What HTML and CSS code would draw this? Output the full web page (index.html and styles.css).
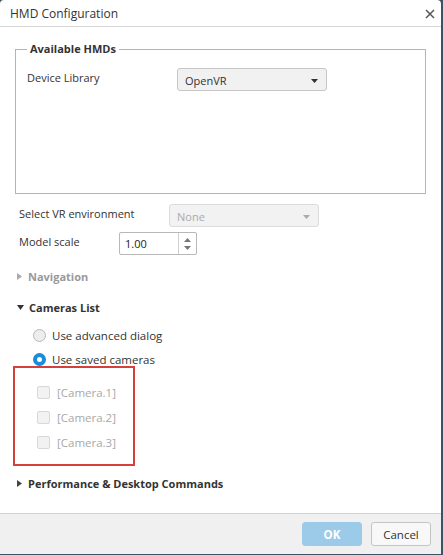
FILE: index.html
```html
<!DOCTYPE html>
<html>
<head>
<meta charset="utf-8">
<link rel="stylesheet" href="styles.css">
</head>
<body>
<div class="window">
  <div class="titlebar">
    <span class="title">HMD Configuration</span>
    <svg class="close" width="10" height="10" viewBox="0 0 10 10"><path d="M1 1L9 9M9 1L1 9" stroke="#555" stroke-width="1.5" fill="none"/></svg>
  </div>
  <div class="content">
    <fieldset class="group">
      <legend class="legend">Available HMDs</legend>
      <div class="row device-row">
        <span class="label device-label">Device Library</span>
        <div class="select">
          <span>OpenVR</span>
          <svg width="7" height="4" viewBox="0 0 7 4"><path d="M0 0H7L3.5 4Z" fill="#333"/></svg>
        </div>
      </div>
    </fieldset>
    <div class="row env-row">
      <span class="label env-label">Select VR environment</span>
      <div class="select disabled">
        <span>None</span>
        <svg width="7" height="4" viewBox="0 0 7 4"><path d="M0 0H7L3.5 4Z" fill="#aaa"/></svg>
      </div>
    </div>
    <div class="row scale-row">
      <span class="label scale-label">Model scale</span>
      <div class="spinner">
        <span class="spin-value">1.00</span>
        <div class="spin-btns">
          <svg width="7" height="4" viewBox="0 0 7 4"><path d="M0 4H7L3.5 0Z" fill="#777"/></svg>
          <svg width="7" height="4" viewBox="0 0 7 4"><path d="M0 0H7L3.5 4Z" fill="#777"/></svg>
        </div>
      </div>
    </div>
    <div class="section nav-section muted">
      <svg width="5" height="7" viewBox="0 0 5 7"><path d="M0 0V7L5 3.5Z" fill="#aaa"/></svg>
      <span>Navigation</span>
    </div>
    <div class="section cams-section">
      <svg width="7" height="5" viewBox="0 0 7 5"><path d="M0 0H7L3.5 5Z" fill="#333"/></svg>
      <span>Cameras List</span>
    </div>
    <div class="radios">
      <div class="radio-row"><span class="radio"></span><span>Use advanced dialog</span></div>
      <div class="radio-row"><span class="radio checked"></span><span>Use saved cameras</span></div>
    </div>
    <div class="highlight">
      <div class="check-row"><span class="check"></span><span>[Camera.1]</span></div>
      <div class="check-row"><span class="check"></span><span>[Camera.2]</span></div>
      <div class="check-row"><span class="check"></span><span>[Camera.3]</span></div>
    </div>
    <div class="section perf-section">
      <svg width="5" height="7" viewBox="0 0 5 7"><path d="M0 0V7L5 3.5Z" fill="#444"/></svg>
      <span>Performance &amp; Desktop Commands</span>
    </div>
  </div>
  <div class="footer">
    <button class="btn ok">OK</button>
    <button class="btn cancel">Cancel</button>
  </div>
</div>
</body>
</html>
```

FILE: styles.css
```css
html, body {
  margin: 0;
  padding: 0;
  background: #3d5265;
  width: 443px;
  height: 555px;
  overflow: hidden;
}
body {
  font-family: "Open Sans", "Noto Sans", sans-serif;
  font-size: 11px;
  color: #333;
}
.window {
  width: 441px;
  height: 554px;
  background: #fff;
  border-radius: 4px 4px 0 0;
  display: flex;
  flex-direction: column;
  box-sizing: border-box;
}
.titlebar {
  height: 27px;
  box-sizing: border-box;
  border-bottom: 1px solid #d6d6d6;
  display: flex;
  align-items: center;
  justify-content: space-between;
  padding: 0 6px 0 10px;
}
.title {
  font-size: 12px;
  color: #333;
}
.close {
  margin-top: 1px;
}
.content {
  flex: 1;
  padding: 0 15px;
  display: flex;
  flex-direction: column;
}
.group {
  margin: 14px 0 0 0;
  padding: 0 11px 0 11px;
  border: 1px solid #b4b4b4;
  height: 153px;
  box-sizing: border-box;
  min-width: 0;
}
.legend {
  font-weight: bold;
  padding: 0 3px;
  height: 16px;
  line-height: 16px;
  color: #333;
}
.row {
  display: flex;
  align-items: center;
  height: 23px;
}
.label {
  flex-shrink: 0;
}
.device-row {
  margin-top: 11px;
}
.device-label {
  width: 150px;
  margin-top: -5px;
}
.select {
  width: 150px;
  height: 23px;
  box-sizing: border-box;
  border: 1px solid #c6c6c6;
  border-radius: 3px;
  background: #f1f1f1;
  display: flex;
  align-items: center;
  justify-content: space-between;
  padding: 2px 8px 0 7px;
}
.select.disabled {
  color: #aaa;
  background: #f2f2f2;
  border-color: #dcdcdc;
}
.env-row {
  margin-top: 10px;
  padding-left: 4px;
}
.env-label {
  width: 150px;
  margin-top: -4px;
}
.scale-row {
  margin-top: 5px;
  padding-left: 4px;
}
.scale-label {
  width: 100px;
  margin-top: -4px;
}
.spinner {
  width: 78px;
  height: 23px;
  box-sizing: border-box;
  border: 1px solid #b8b8b8;
  border-radius: 2px;
  display: flex;
  align-items: stretch;
  background: #fff;
}
.spin-value {
  flex: 1;
  padding: 3px 0 0 5px;
  color: #222;
}
.spin-btns {
  width: 17px;
  border-left: 1px solid #d0d0d0;
  display: flex;
  flex-direction: column;
  align-items: center;
  justify-content: center;
  gap: 4px;
}
.section {
  display: flex;
  align-items: center;
  gap: 6px;
  height: 20px;
  font-weight: bold;
  padding-left: 2px;
}
.section.muted {
  color: #999;
}
.nav-section {
  margin-top: 11px;
}
.cams-section {
  margin-top: 11px;
  gap: 5px;
}
.perf-section {
  margin-top: 7px;
}
.radios {
  display: flex;
  flex-direction: column;
  gap: 10px;
  margin-top: 11px;
  padding-left: 18px;
}
.radio-row {
  display: flex;
  align-items: center;
  gap: 6px;
  height: 14px;
  font-size: 11.5px;
}
.radio {
  width: 13px;
  height: 13px;
  box-sizing: border-box;
  border-radius: 50%;
  border: 1px solid #b9b9b9;
  background: #ededed;
}
.radio.checked {
  border: 4px solid #1a8cd8;
  background: #fff;
}
.highlight {
  margin-left: -2px;
  width: 122px;
  height: 100px;
  box-sizing: border-box;
  border: 2px solid #d4403b;
  padding: 17px 0 0 22px;
  display: flex;
  flex-direction: column;
  gap: 11px;
}
.check-row {
  display: flex;
  align-items: center;
  gap: 7px;
  height: 14px;
  color: #a8a8a8;
  font-size: 11.5px;
}
.check {
  width: 13px;
  height: 13px;
  box-sizing: border-box;
  border: 1px solid #d8d8d8;
  border-radius: 2px;
  background: #f2f2f2;
}
.footer {
  height: 41px;
  box-sizing: border-box;
  border-top: 1px solid #d2d2d2;
  background: #f0f0f0;
  display: flex;
  justify-content: flex-end;
  align-items: flex-start;
  gap: 9px;
  padding: 8px 10px 0 0;
}
.btn {
  width: 60px;
  height: 24px;
  font-family: "Open Sans", "Noto Sans", sans-serif;
  font-size: 11.5px;
  border-radius: 3px;
  padding: 0;
}
.ok {
  background: #9ccbea;
  border: 1px solid #9ccbea;
  color: #fff;
  font-weight: bold;
}
.cancel {
  background: #f8f8f8;
  border: 1px solid #c4c4c4;
  color: #333;
}
```
